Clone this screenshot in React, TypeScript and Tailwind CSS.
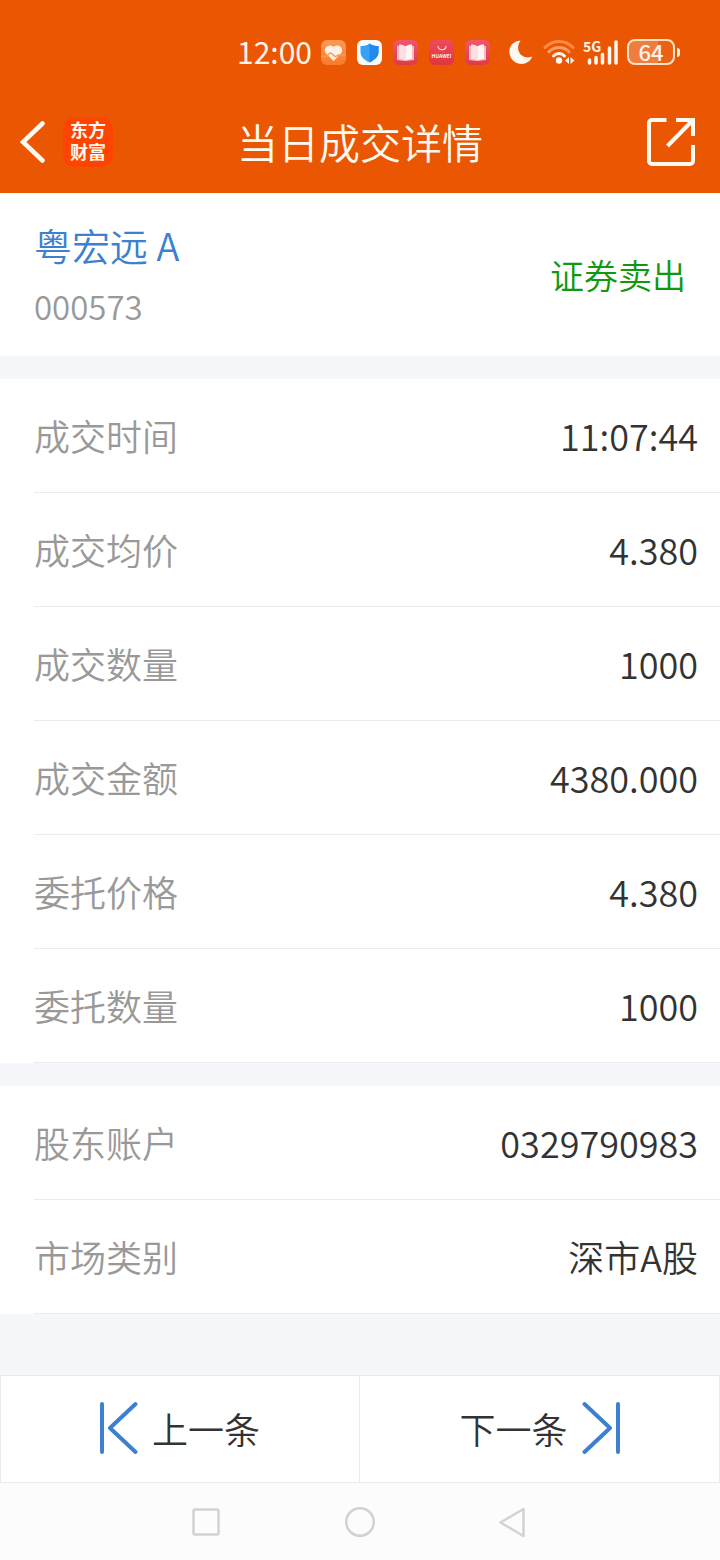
import type { ReactNode } from "react"

interface DetailItem {
  label: string
  value: string
}

const TRADE_ITEMS: DetailItem[] = [
  { label: "成交时间", value: "11:07:44" },
  { label: "成交均价", value: "4.380" },
  { label: "成交数量", value: "1000" },
  { label: "成交金额", value: "4380.000" },
  { label: "委托价格", value: "4.380" },
  { label: "委托数量", value: "1000" },
]

const ACCOUNT_ITEMS: DetailItem[] = [
  { label: "股东账户", value: "0329790983" },
  { label: "市场类别", value: "深市A股" },
]

// ---------- Status bar ----------

function AppBadge({ className, children }: { className: string; children: ReactNode }) {
  return (
    <span className={`flex size-[25px] items-center justify-center rounded-md ${className}`}>
      {children}
    </span>
  )
}

function BookBadge() {
  return (
    <AppBadge className="bg-linear-to-b from-[#f0566c] to-[#e03a44]">
      <svg viewBox="0 0 25 25" className="size-[25px]">
        <path d="M4 6h17v14l-8.500 1L4 20z" fill="#f7bcc2" />
        <path d="M6 4.500c2.500 0 5 .6 6.500 2v14c-1.500-1-4-1.500-6.500-1.500z" fill="#fbe0e2" />
        <path d="M12.500 6.500c1.500-1.400 4-2 6.500-2V19c-2.500 0-5 .5-6.500 1.500z" fill="#fff5f2" />
      </svg>
    </AppBadge>
  )
}

function StatusBar() {
  return (
    <div className="flex h-[92px] items-center justify-end pt-3 pr-10 text-[#fff6ea]">
      <span className="mr-[9px] pb-0.5 text-[30px] leading-none font-normal">12:00</span>
      <div className="flex gap-[11px]">
        <AppBadge className="bg-linear-to-b from-[#ff9a50] to-[#f87a2c]">
          <svg viewBox="0 0 25 25" className="size-[25px]" fill="none">
            <path
              d="M12.500 21 5.500 14c-5-5.500 2.500-11.500 7-7 4.500-4.500 12 1.500 7 7z"
              fill="#fff3e8"
            />
            <path
              d="M0 16.500h5c2 0 2.500-3.500 4.500-3.500s3 3.500 5 3.500 2-2 4-1.500H25"
              stroke="#fb9a55"
              strokeWidth="1.500"
            />
          </svg>
        </AppBadge>
        <AppBadge className="bg-[#fbfbfb]">
          <svg viewBox="0 0 25 25" className="size-[25px]">
            <path d="M12.500 3.500c2.500 1.800 5.500 2.500 9 2.600v6c0 5-4 8-9 10.400-5-2.400-9-5.400-9-10.400v-6c3.500-.1 6.500-.8 9-2.600z" fill="#36a2f5" />
            <path d="M12.500 3.500c2.500 1.800 5.500 2.500 9 2.600v6c0 5-4 8-9 10.400z" fill="#2389ee" />
          </svg>
        </AppBadge>
        <BookBadge />
        <AppBadge className="flex-col bg-linear-to-b from-[#f04a5c] to-[#e2333f]">
          <svg viewBox="0 0 12 6" className="h-[6px] w-3" fill="none">
            <path d="M2 1c0 5 8 5 8 0" stroke="#ffe3e0" strokeWidth="1.200" />
          </svg>
          <span className="text-[5px] leading-[9px] font-bold">HUAWEI</span>
        </AppBadge>
        <BookBadge />
      </div>
      <svg viewBox="0 0 24 25" className="ml-[19px] h-[25px] w-6" fill="#fff8f0">
        <path d="M11.500.5C3 1.500-.5 7.500.500 13.500c2 12.500 19 14 22.700 3C14 20.500 4.500 11 11.500.5z" />
      </svg>
      <svg viewBox="0 0 32 26" className="ml-[10px] h-[26px] w-8" fill="none" strokeLinecap="round">
        <path d="M2 8.500c8-8 20-8 28 0" stroke="#ff8a45" strokeWidth="3" />
        <path d="M6 12.800c5.500-5.600 14.500-5.600 20 0" stroke="#ff9c60" strokeWidth="3" />
        <path d="M10.500 17c3-3.200 8-3.200 11 0" stroke="#fff8f0" strokeWidth="3" />
        <circle cx="16" cy="21.500" r="3.200" fill="#fff8f0" />
        <path d="m22 21.500 4-3.500v7zM31.500 21.500l-4-3.500v7z" fill="#fff8f0" />
      </svg>
      <div className="relative ml-2 h-[26px] w-9">
        <span className="absolute top-0 left-0 text-[14px] leading-[14px] font-bold">5G</span>
        <svg viewBox="0 0 36 26" className="h-[26px] w-9" fill="none">
          <path
            d="M6.500 21v3M13 18.500v5.500M19.500 15.500V24M26.500 9v15M33 3v21"
            stroke="#fff8f0"
            strokeWidth="3.500"
            strokeLinecap="round"
          />
        </svg>
      </div>
      <span className="ml-2 flex h-[26px] w-12 items-center justify-center rounded-lg border-2 border-[#fde6c8] bg-linear-to-r from-[#f07d40] from-66% to-[#eb6215] to-66% pb-0.5 text-[22px] leading-none font-medium">
        64
      </span>
      <span className="ml-[2px] h-[9px] w-[3px] rounded-r-sm bg-[#fff1dc]" />
    </div>
  )
}

// ---------- Header ----------

function NavBar() {
  return (
    <div className="grid h-[101px] grid-cols-[1fr_auto_1fr] items-center px-5 pb-0.5 text-[#fffaf0]">
      <div className="flex items-center gap-[18px]">
        <button type="button" aria-label="返回">
          <svg viewBox="0 0 25 42" className="h-[42px] w-[25px]" fill="none">
            <path d="M22.500 2.500 3 21l19.500 18.500" stroke="currentColor" strokeWidth="4.500" strokeLinecap="round" />
          </svg>
        </button>
        <span className="flex size-[50px] flex-col items-center justify-center rounded-xl bg-[#ff4400] font-['Liberation_Sans','Noto_Sans_CJK_SC',sans-serif] text-[18px] leading-[22px] font-bold">
          <span>东方</span>
          <span>财富</span>
        </span>
      </div>
      <h1 className="text-[41px] leading-none">当日成交详情</h1>
      <button type="button" aria-label="分享" className="justify-self-end pr-1">
        <svg viewBox="0 0 50 50" className="size-[50px]" fill="none" stroke="currentColor" strokeWidth="4">
          <path d="M20.500 3H6a3 3 0 0 0-3 3v38a3 3 0 0 0 3 3h38a3 3 0 0 0 3-3V28" />
          <path d="M30 3h17v16" />
          <path d="M46 4 21.500 29" />
        </svg>
      </button>
    </div>
  )
}

// ---------- Detail rows ----------

function DetailList({ items }: { items: DetailItem[] }) {
  return (
    <dl>
      {items.map((item) => (
        <div key={item.label} className="bg-white pl-[34px]">
          <div className="flex h-[114px] items-center justify-between border-b border-[#ebebed] pr-[22px] pb-0.5 text-[36px] leading-none">
            <dt className="text-[#999999]">{item.label}</dt>
            <dd className="text-[#333333]">{item.value}</dd>
          </div>
        </div>
      ))}
    </dl>
  )
}

function StepIcon({ next = false }: { next?: boolean }) {
  return (
    <svg
      viewBox="0 0 38 54"
      className={next ? "h-[54px] w-[38px] rotate-180" : "h-[54px] w-[38px]"}
      fill="none"
      stroke="#3d7fd1"
      strokeWidth="4"
      strokeLinecap="round"
      strokeLinejoin="round"
    >
      <path d="M2 3v48M35.500 3 10 27l25.500 24" />
    </svg>
  )
}

export default function App() {
  return (
    <div className="flex min-h-screen flex-col bg-[#f6f7fa] font-['Noto_Sans_CJK_SC',sans-serif] font-[350]">
      <header className="bg-[#eb5603]">
        <StatusBar />
        <NavBar />
      </header>

      <main className="flex-1">
        <section className="mb-[23px] flex h-[163px] items-center justify-between bg-white px-[34px]">
          <div className="flex flex-col gap-[26px]">
            <h2 className="text-[38px] leading-none text-[#3d7fd1]">粤宏远 A</h2>
            <p className="text-[33px] leading-none text-[#999999]">000573</p>
          </div>
          <span className="text-[34px] leading-none text-[#0f990f]">证券卖出</span>
        </section>

        <div className="flex flex-col gap-[23px]">
          <DetailList items={TRADE_ITEMS} />
          <DetailList items={ACCOUNT_ITEMS} />
        </div>
      </main>

      <div className="grid h-[108px] grid-cols-2 border border-[#ebebed] bg-white text-[36px] leading-none text-[#333333]">
        <button type="button" className="flex items-center justify-center gap-[14px] border-r border-[#ebebed] pb-0.5">
          <StepIcon />
          上一条
        </button>
        <button type="button" className="flex items-center justify-center gap-[14px] pb-0.5">
          下一条
          <StepIcon next />
        </button>
      </div>

      {/* system navigation */}
      <nav className="flex h-[77px] items-center justify-center gap-[122px] bg-[#fcfcfc]">
        <button type="button" aria-label="最近任务">
          <svg viewBox="0 0 32 32" className="size-8" fill="none" stroke="#d2d2d2" strokeWidth="2.500">
            <rect x="3.500" y="3.500" width="25" height="25" rx="1.500" />
          </svg>
        </button>
        <button type="button" aria-label="主页">
          <svg viewBox="0 0 32 32" className="size-8" fill="none" stroke="#d2d2d2" strokeWidth="2.500">
            <circle cx="16" cy="16" r="13.800" />
          </svg>
        </button>
        <button type="button" aria-label="后退">
          <svg viewBox="0 0 32 32" className="size-8" fill="none" stroke="#d2d2d2" strokeWidth="2.500" strokeLinejoin="round">
            <path d="M2.500 16.500 25.500 3v27z" />
          </svg>
        </button>
      </nav>
    </div>
  )
}
